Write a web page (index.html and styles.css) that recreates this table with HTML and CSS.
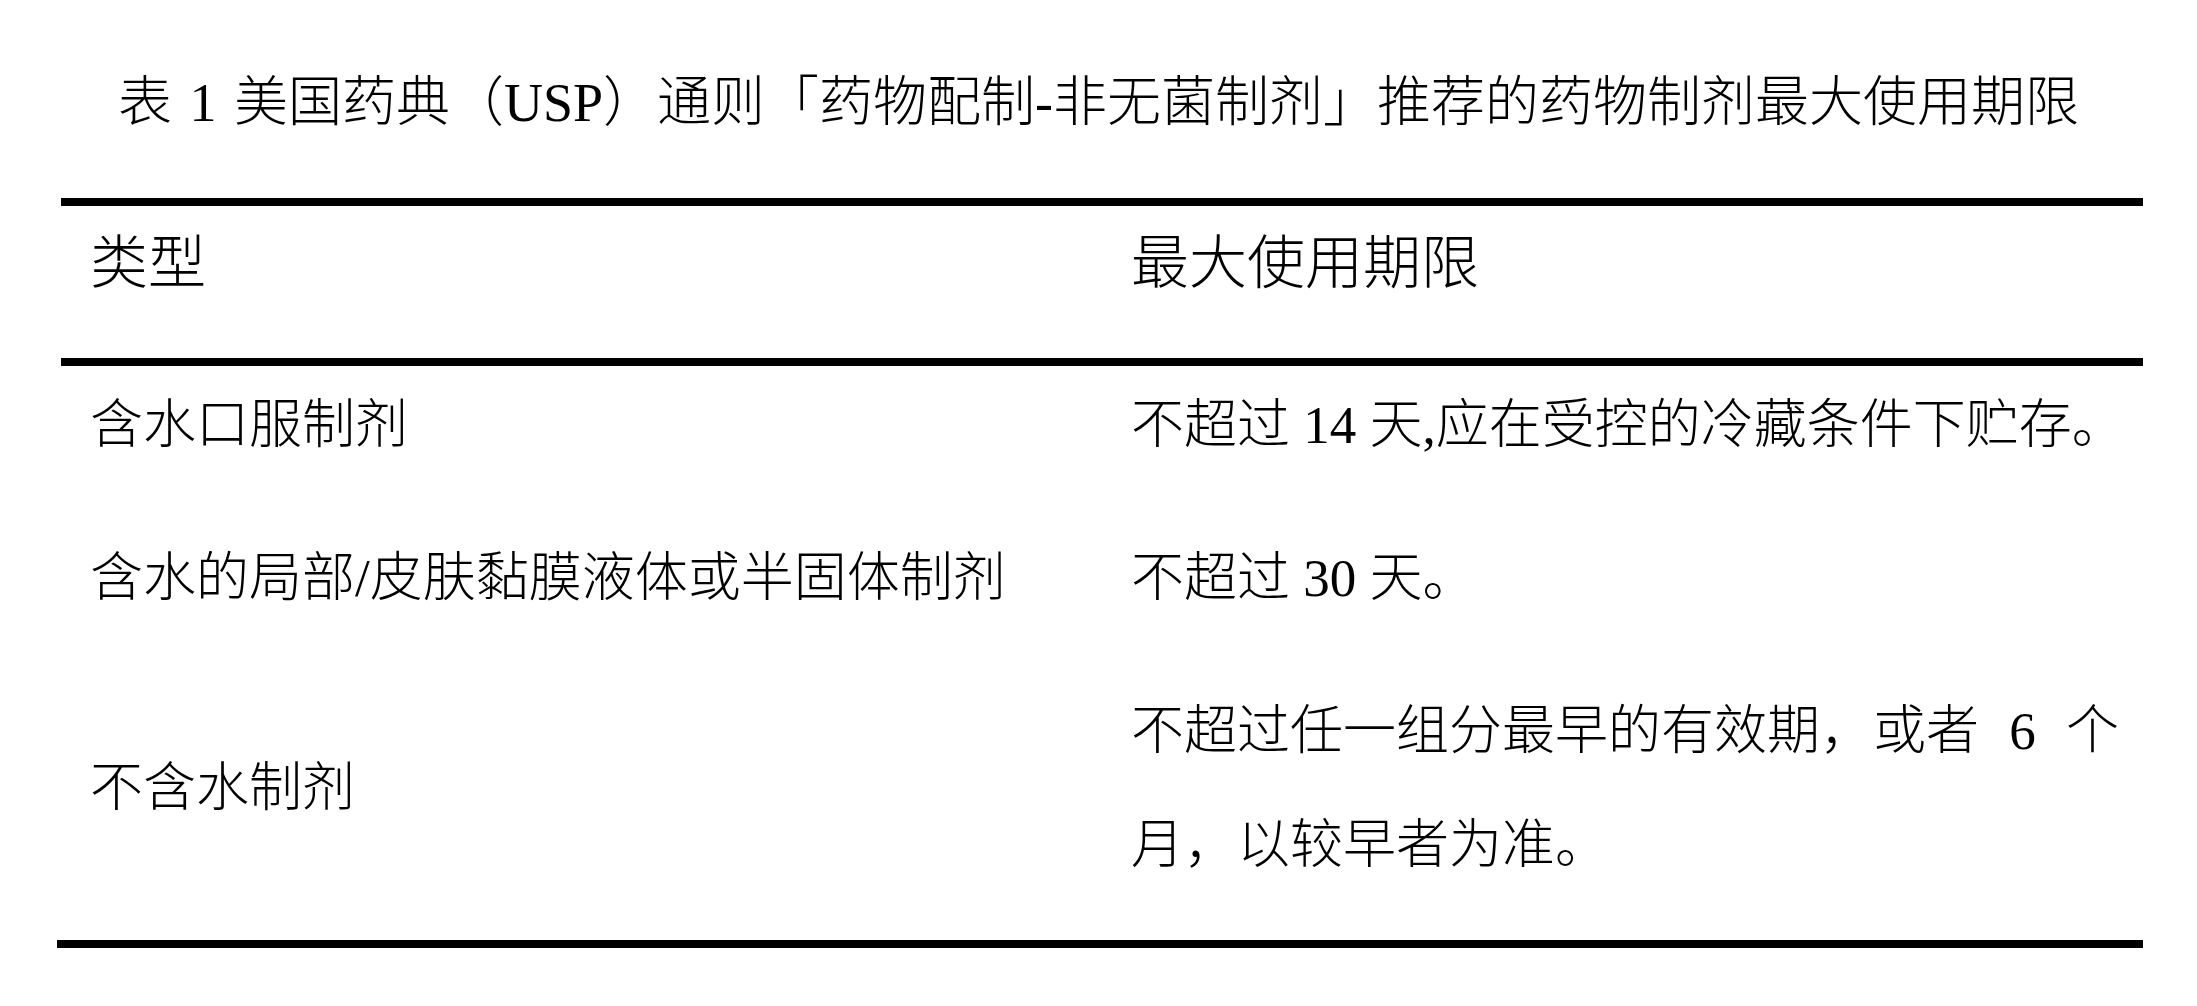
FILE: index.html
```html
<!DOCTYPE html>
<html lang="zh-CN">
<head>
<meta charset="utf-8">
<title>表 1</title>
<link rel="stylesheet" href="styles.css">
</head>
<body>
<h1 class="title">表 1 美国药典（USP）通则「药物配制-非无菌制剂」推荐的药物制剂最大使用期限</h1>
<div class="table">
  <div class="head">
    <div class="cell">类型</div>
    <div class="cell">最大使用期限</div>
  </div>
  <div class="rows">
    <div class="row">
      <div class="cell">含水口服制剂</div>
      <div class="cell">不超过 14 天,应在受控的冷藏条件下贮存。</div>
    </div>
    <div class="row">
      <div class="cell">含水的局部/皮肤黏膜液体或半固体制剂</div>
      <div class="cell">不超过 30 天。</div>
    </div>
    <div class="row">
      <div class="cell">不含水制剂</div>
      <div class="cell wide">不超过任一组分最早的有效期，或者 6 个<br>月，以较早者为准。</div>
    </div>
  </div>
</div>
</body>
</html>
```
FILE: styles.css
```css
body {
  margin: 0;
  background: #fff;
  color: #000;
  font-family: "Liberation Serif", "Noto Sans CJK SC", serif;
  font-weight: 300;
}

.title {
  margin: 63px 0 0;
  font-size: 54px;
  font-weight: 300;
  line-height: 80px;
  text-align: center;
  word-spacing: 4px;
}

.table {
  margin: 55px 54px 0 61px;
  border-top: 8px solid #000;
}

.head {
  display: grid;
  grid-template-columns: 1fr 1fr;
  font-size: 58px;
  line-height: 114px;
  padding: 1px 0 37px;
  border-bottom: 8px solid #000;
}

.cell {
  padding-left: 29px;
  white-space: nowrap;
}

.rows {
  display: flex;
  flex-direction: column;
  gap: 39px;
  margin-left: -4px;
  padding: 2px 0 38px 4px;
  border-bottom: 8px solid #000;
}

.row {
  display: grid;
  grid-template-columns: 1fr 1fr;
  align-items: center;
  font-size: 53px;
  line-height: 114px;
}

.wide {
  word-spacing: 17px;
}
```
